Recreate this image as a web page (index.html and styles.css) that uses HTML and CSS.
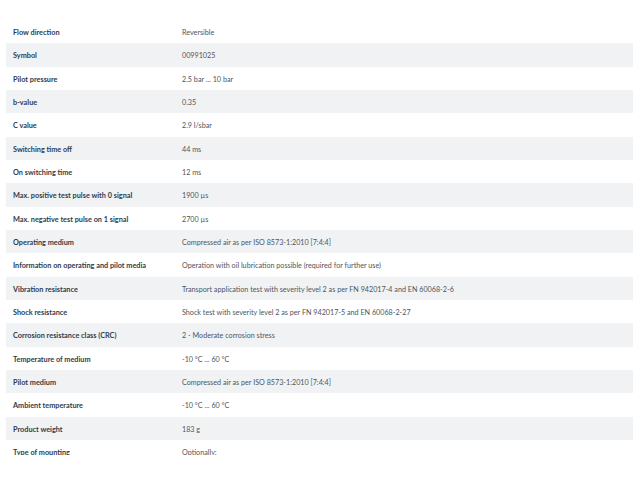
FILE: index.html
```html
<!doctype html>
<html lang="en">
  <head>
    <meta charset="UTF-8" />
    <meta name="viewport" content="width=device-width, initial-scale=1.0" />
    <title>Technical data</title>
    <link rel="stylesheet" href="styles.css">
  </head>
  <body>
    <div class="data-panel">
      <div class="data-table">
        <div class="data-row"><div class="data-label">Flow direction</div><div class="data-value">Reversible</div></div>
        <div class="data-row"><div class="data-label">Symbol</div><div class="data-value">00991025</div></div>
        <div class="data-row"><div class="data-label">Pilot pressure</div><div class="data-value">2.5 bar ... 10 bar</div></div>
        <div class="data-row"><div class="data-label">b-value</div><div class="data-value">0.35</div></div>
        <div class="data-row"><div class="data-label">C value</div><div class="data-value">2.9 l/sbar</div></div>
        <div class="data-row"><div class="data-label">Switching time off</div><div class="data-value">44 ms</div></div>
        <div class="data-row"><div class="data-label">On switching time</div><div class="data-value">12 ms</div></div>
        <div class="data-row"><div class="data-label">Max. positive test pulse with 0 signal</div><div class="data-value">1900 µs</div></div>
        <div class="data-row"><div class="data-label">Max. negative test pulse on 1 signal</div><div class="data-value">2700 µs</div></div>
        <div class="data-row"><div class="data-label">Operating medium</div><div class="data-value">Compressed air as per ISO 8573-1:2010 [7:4:4]</div></div>
        <div class="data-row"><div class="data-label">Information on operating and pilot media</div><div class="data-value">Operation with oil lubrication possible (required for further use)</div></div>
        <div class="data-row"><div class="data-label">Vibration resistance</div><div class="data-value">Transport application test with severity level 2 as per FN 942017-4 and EN 60068-2-6</div></div>
        <div class="data-row"><div class="data-label">Shock resistance</div><div class="data-value">Shock test with severity level 2 as per FN 942017-5 and EN 60068-2-27</div></div>
        <div class="data-row"><div class="data-label">Corrosion resistance class (CRC)</div><div class="data-value">2 - Moderate corrosion stress</div></div>
        <div class="data-row"><div class="data-label">Temperature of medium</div><div class="data-value">-10 °C ... 60 °C</div></div>
        <div class="data-row"><div class="data-label">Pilot medium</div><div class="data-value">Compressed air as per ISO 8573-1:2010 [7:4:4]</div></div>
        <div class="data-row"><div class="data-label">Ambient temperature</div><div class="data-value">-10 °C ... 60 °C</div></div>
        <div class="data-row"><div class="data-label">Product weight</div><div class="data-value">183 g</div></div>
        <div class="data-row"><div class="data-label">Type of mounting</div><div class="data-value">Optionally:</div></div>
      </div>
    </div>
  </body>
</html>
```

FILE: styles.css
```css
body {
  margin: 0;
  background: #ffffff;
  font-family: Lato, "Open Sans", sans-serif;
}

.data-panel {
  height: 455px;
  overflow: hidden;
  padding: 20px 7px 0 6px;
  box-sizing: border-box;
}

.data-row {
  display: grid;
  grid-template-columns: 169px 1fr;
  height: 23.33px;
  align-items: center;
  padding-top: 2px;
  box-sizing: border-box;
}

.data-row:nth-child(even) {
  background-color: #f1f2f4;
}

.data-label {
  padding-left: 7px;
  font-size: 7.3px;
  font-weight: 700;
  color: #2f3b4c;
}

.data-value {
  padding-left: 7px;
  font-size: 7.2px;
  color: #4e565e;
}
```
